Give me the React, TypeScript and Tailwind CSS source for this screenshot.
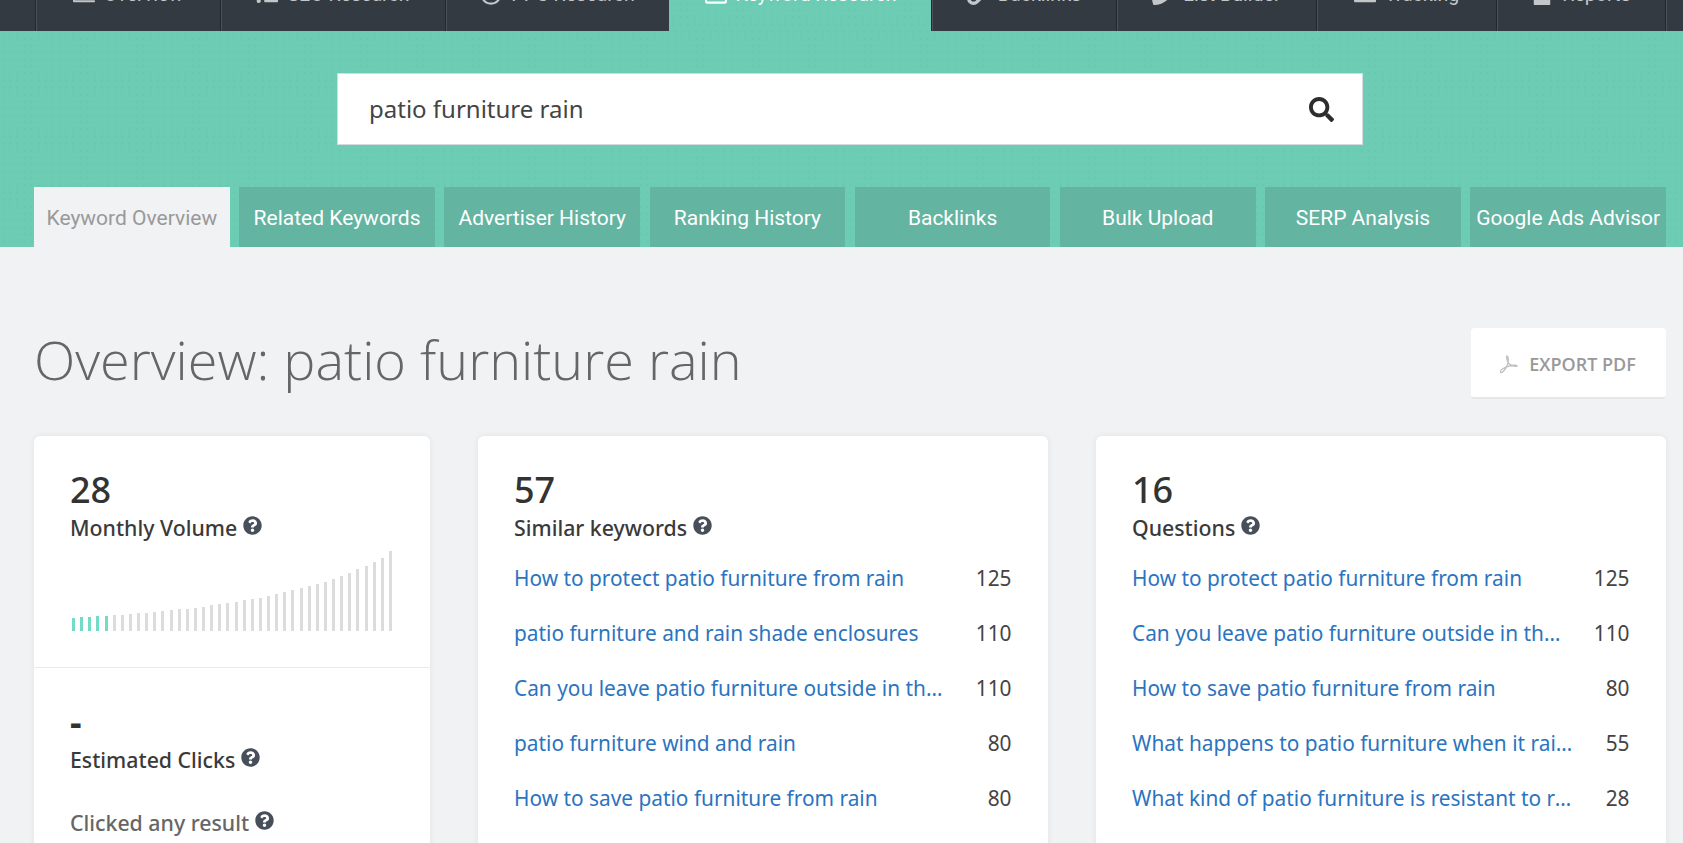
import React from "react";
import { FaSearch, FaQuestionCircle, FaRegChartBar, FaTasks, FaRegCompass, FaRegWindowMaximize, FaLink, FaPhone, FaChartLine, FaFileAlt } from "react-icons/fa";

const navItems: { w: string; label: string; Icon: any; active?: boolean }[] = [
  { w: "w-[185px]", label: "Overview", Icon: FaRegChartBar },
  { w: "w-[225px]", label: "SEO Research", Icon: FaTasks },
  { w: "w-[224px]", label: "PPC Research", Icon: FaRegCompass },
  { w: "w-[262px]", label: "Keyword Research", Icon: FaRegWindowMaximize, active: true },
  { w: "w-[185px]", label: "Backlinks", Icon: FaLink },
  { w: "w-[200px]", label: "List Builder", Icon: FaPhone },
  { w: "w-[180px]", label: "Tracking", Icon: FaChartLine },
  { w: "w-[169px]", label: "Reports", Icon: FaFileAlt },
];

const tabs = ["Keyword Overview", "Related Keywords", "Advertiser History", "Ranking History", "Backlinks", "Bulk Upload", "SERP Analysis", "Google Ads Advisor"];

const bars = [13, 14, 14, 15, 15, 16, 16, 17, 18, 18, 19, 20, 21, 22, 22, 23, 24, 26, 27, 28, 29, 31, 32, 33, 35, 37, 39, 41, 43, 45, 47, 49, 52, 55, 58, 62, 65, 69, 73, 80];

const similar: [string, string, string][] = [
  ["How to protect patio furniture from rain", "125", "w-[445px]"],
  ["patio furniture and rain shade enclosures", "110", "w-[445px]"],
  ["Can you leave patio furniture outside in the rain", "110", "w-[436px]"],
  ["patio furniture wind and rain", "80", "w-[445px]"],
  ["How to save patio furniture from rain", "80", "w-[445px]"],
];
const questions: [string, string, string][] = [
  ["How to protect patio furniture from rain", "125", "w-[445px]"],
  ["Can you leave patio furniture outside in the rain", "110", "w-[436px]"],
  ["How to save patio furniture from rain", "80", "w-[445px]"],
  ["What happens to patio furniture when it rains outside", "55", "w-[445px]"],
  ["What kind of patio furniture is resistant to rain damage", "28", "w-[445px]"],
];

function Help() {
  return <FaQuestionCircle className="ml-[6px] mt-[-6px] text-[19px] text-[#474f5a] shrink-0" />;
}

function Label({ text, cls = "text-[#3a3a3a]" }: { text: string; cls?: string }) {
  return (
    <div className={`flex items-center font-['Noto_Sans',sans-serif] text-[21.3px] leading-[30px] font-medium ${cls}`}>
      <span>{text}</span>
      <Help />
    </div>
  );
}

function ListCard({ n, label, rows }: { n: string; label: string; rows: [string, string, string][] }) {
  return (
    <div className="bg-white rounded-md shadow-[0_0_6px_rgba(0,0,0,0.07)] pl-[36px] pr-[36.5px] pt-[34px] h-[420px]">
      <div className="font-['Noto_Sans',sans-serif] text-[36px] leading-[40px] font-medium text-[#333]">{n}</div>
      <div className="mt-[3px]">
        <Label text={label} />
      </div>
      <div className="mt-[8px]">
        {rows.map(([t, v, w], i) => (
          <div key={i} className="flex items-center justify-between h-[55px] text-[20.85px] font-['Noto_Sans',sans-serif]">
            <a className={`block ${w} truncate text-[#2b74c0]`}>{t}</a>
            <span className="text-[#444]">{v}</span>
          </div>
        ))}
      </div>
    </div>
  );
}

export default function App() {
  return (
    <div className="h-[843px] w-[1683px] overflow-hidden bg-[#f1f2f4] font-['Open_Sans','Noto_Sans',sans-serif]">
      <div className="h-[247px] bg-[#6dcdb4] bg-[radial-gradient(#6ac9b0_1px,transparent_1.5px)] bg-[length:7px_7px]">
        <div className="flex h-[31px] overflow-hidden bg-[#343a41] pl-[35px] font-['Roboto',sans-serif] text-[19.6px] text-[#c4c7ca]">
          {navItems.map(({ w, label, Icon, active }) => (
            <div
              key={label}
              className={`${w} flex shrink-0 items-start justify-center border-l border-[#23282d] ${active ? "border-transparent bg-[#6dcdb4] bg-[radial-gradient(#6ac9b0_1px,transparent_1.5px)] bg-[length:7px_7px] text-white" : "shadow-[inset_1px_0_0_#4b5158]"}`}
            >
              <div className="mt-[-17px] flex items-end gap-[9px] leading-[24px]">
                <Icon className="mb-[2px] text-[22px]" />
                <span>{label}</span>
              </div>
            </div>
          ))}
          <div className="flex-1 border-l border-[#23282d] shadow-[inset_1px_0_0_#4b5158]" />
        </div>

        <div className="ml-[34px] mr-[17px]">
          <div className="ml-[303px] mt-[42px] flex h-[72px] w-[1026px] items-center justify-between border border-[#d6dadf] bg-white pl-[31px] pr-[28px] font-['Noto_Sans',sans-serif] text-[24px] text-[#444]">
            <span>patio furniture rain</span>
            <FaSearch className="text-[25px] text-[#2d2d2d]" />
          </div>
          <div className="mt-[42px] flex h-[60px] gap-[9.5px] font-['Roboto',sans-serif] text-[21px]">
            {tabs.map((t, i) => (
              <div
                key={t}
                className={`flex h-full w-[195.7px] shrink-0 items-center justify-center whitespace-nowrap pt-[4px] ${i === 0 ? "bg-[#f1f2f4] text-[#999]" : "bg-[#63b4a1] text-white"}`}
              >
                {t}
              </div>
            ))}
          </div>
        </div>
      </div>

      <div className="ml-[34px] mr-[17px]">
        <div className="flex h-[189px] items-start justify-between">
          <h1 className="mt-[76px] text-[54px] leading-[72px] font-light text-[#666]">Overview: patio furniture rain</h1>
          <div className="mt-[81px] flex h-[71px] w-[195px] items-center justify-center gap-[11px] rounded border-b-[2px] border-[#e6e7e9] bg-white pt-[4px] pr-[2px] text-[18px] font-semibold text-[#999]">
            <svg viewBox="0 0 20 20" className="h-[19px] w-[19px]" fill="none" stroke="#bdbdbd" strokeWidth="1.3">
              <path d="M8.5 1C7.5 1 8 4 9 6.5c1 2.500 3 5 9 5.500 1.500 0 1.500-1 0-1.200-4-.5-9 1-14 3.700-2.500 1.500-3 3.500-2 4 1 .4 3-1.500 5-4.500C9.500 10 11 2.500 8.500 1Z" />
            </svg>
            <span>EXPORT PDF</span>
          </div>
        </div>

        <div className="grid grid-cols-[396px_570px_570px] gap-[48px]">
          <div className="h-[420px] rounded-md bg-white shadow-[0_0_6px_rgba(0,0,0,0.07)]">
            <div className="h-[232px] border-b border-[#e8eaed] pl-[36px] pr-[38px] pt-[34px]">
              <div className="font-['Noto_Sans',sans-serif] text-[36px] leading-[40px] font-medium text-[#333]">28</div>
              <div className="mt-[3px]">
                <Label text="Monthly Volume" />
              </div>
              <div className="ml-[2px] mt-[8px] flex h-[80px] items-end justify-between">
                {bars.map((h, i) => (
                  <div
                    key={i}
                    className={`w-[3px] ${i < 5 ? "bg-[#74dcc6]" : "bg-[#dcdcdc]"}`}
                    style={{ height: h }}
                  />
                ))}
              </div>
            </div>
            <div className="pl-[36px] pt-[34px]">
              <div className="font-['Noto_Sans',sans-serif] text-[36px] leading-[40px] font-bold text-[#333]">-</div>
              <div className="mt-[3px]">
                <Label text="Estimated Clicks" />
              </div>
              <div className="mt-[33px]">
                <Label text="Clicked any result" cls="text-[#666]" />
              </div>
            </div>
          </div>
          <ListCard n="57" label="Similar keywords" rows={similar} />
          <ListCard n="16" label="Questions" rows={questions} />
        </div>
      </div>
    </div>
  );
}
